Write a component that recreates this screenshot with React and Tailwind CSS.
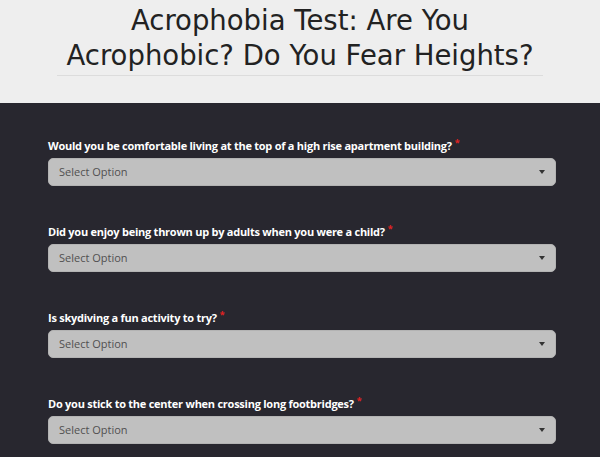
const QUESTIONS = [
  'Would you be comfortable living at the top of a high rise apartment building?',
  'Did you enjoy being thrown up by adults when you were a child?',
  'Is skydiving a fun activity to try?',
  'Do you stick to the center when crossing long footbridges?',
]

function SelectBox() {
  return (
    <div className="h-[28px] rounded-[5px] bg-[#c0c0c0] border border-[#b3b3b3] flex items-center justify-between pl-[10px] pr-[10px]">
      <span className="text-[11px] text-[#505050]">Select Option</span>
      <span className="w-0 h-0 border-l-[3.5px] border-r-[3.5px] border-t-[4px] border-l-transparent border-r-transparent border-t-[#333]" />
    </div>
  )
}

export default function App() {
  return (
    <div className="w-[600px] h-[457px] overflow-hidden font-['Open_Sans',sans-serif]">
      <div className="bg-[#eeeeee] h-[103px] pt-[3px]">
        <div className="mx-[57px] border-b border-[#dcdcdc] pb-[2px]">
          <h1 className="text-center text-[27.5px] leading-[35px] text-[#222] font-['DejaVu_Sans',sans-serif]">
            Acrophobia Test: Are You<br />Acrophobic? Do You Fear Heights?
          </h1>
        </div>
      </div>

      <div className="bg-[#28272f] h-[354px] pt-[35px] px-[48px] pr-[44px]">
        {QUESTIONS.map((q) => (
          <div key={q} className="mb-[38px]">
            <div className="text-[11px] leading-[16px] font-bold text-white mb-[4px] tracking-[-0.25px]">
              {q}
              <sup className="text-[#e32222] text-[9px] ml-[3px] top-[-4px]">*</sup>
            </div>
            <SelectBox />
          </div>
        ))}
      </div>
    </div>
  )
}
